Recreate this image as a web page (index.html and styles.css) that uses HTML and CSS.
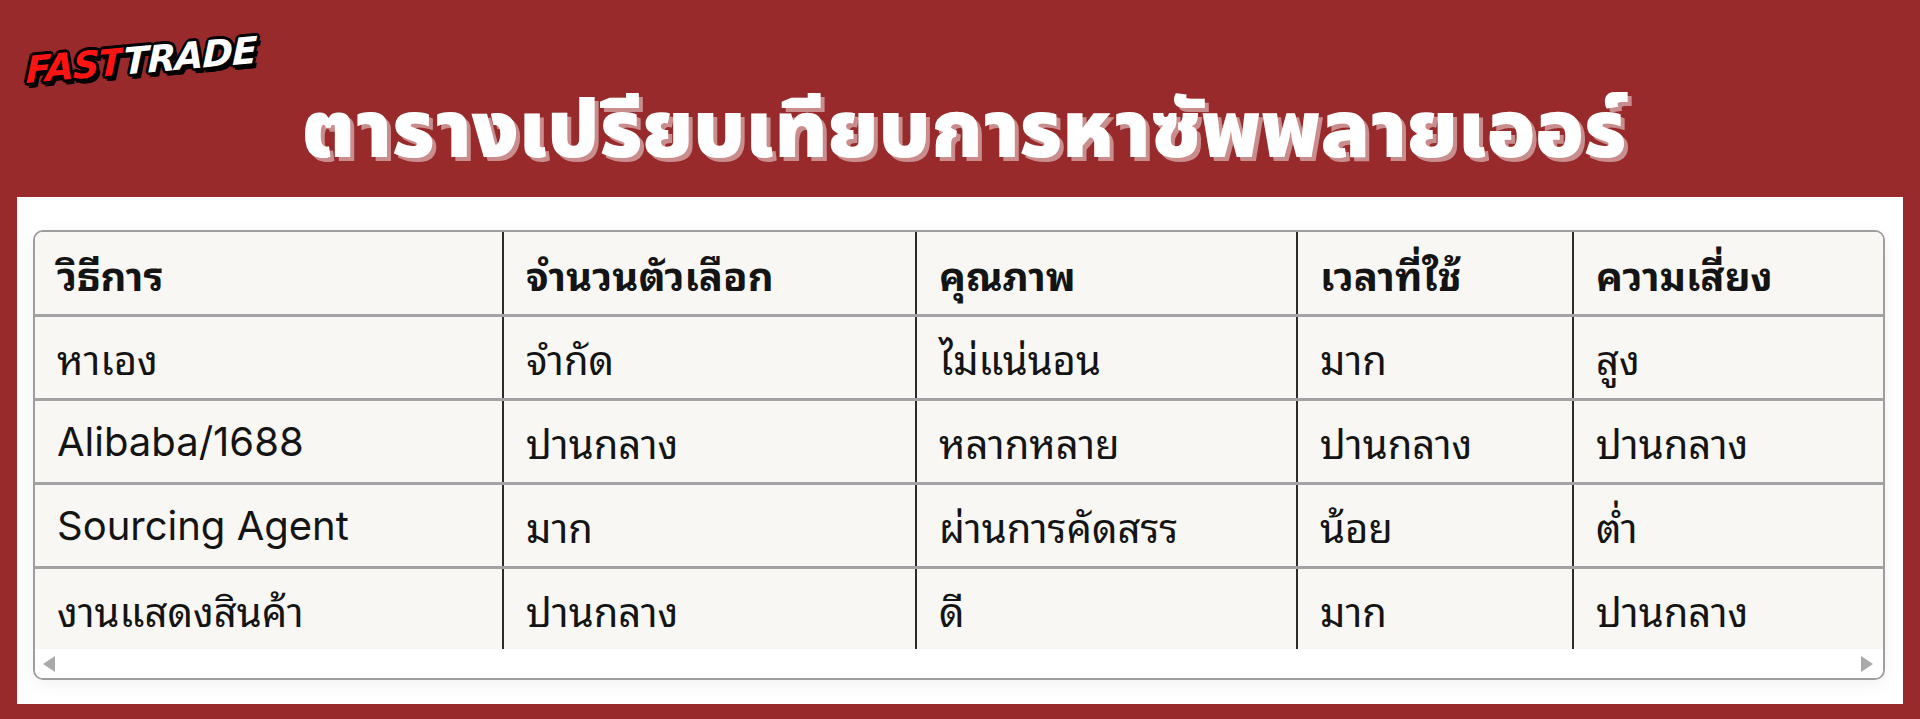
FILE: index.html
```html
<!DOCTYPE html>
<html lang="th">
<head>
<meta charset="utf-8">
<title>ตารางเปรียบเทียบการหาซัพพลายเออร์</title>
<link rel="stylesheet" href="styles.css">
</head>
<body>
<header class="header">
  <div class="logo"><span class="logo-text"><span class="fast">FAST</span><span class="trade">TRADE</span></span></div>
  <h1 class="title">ตารางเปรียบเทียบการหาซัพพลายเออร์</h1>
</header>
<main class="panel">
  <div class="table-wrap">
    <table class="compare">
      <colgroup>
        <col class="c1"><col class="c2"><col class="c3"><col class="c4"><col class="c5">
      </colgroup>
      <thead>
        <tr><th>วิธีการ</th><th>จำนวนตัวเลือก</th><th>คุณภาพ</th><th>เวลาที่ใช้</th><th>ความเสี่ยง</th></tr>
      </thead>
      <tbody>
        <tr><td>หาเอง</td><td>จำกัด</td><td>ไม่แน่นอน</td><td>มาก</td><td>สูง</td></tr>
        <tr><td>Alibaba/1688</td><td>ปานกลาง</td><td>หลากหลาย</td><td>ปานกลาง</td><td>ปานกลาง</td></tr>
        <tr><td>Sourcing Agent</td><td>มาก</td><td>ผ่านการคัดสรร</td><td>น้อย</td><td>ต่ำ</td></tr>
        <tr><td>งานแสดงสินค้า</td><td>ปานกลาง</td><td>ดี</td><td>มาก</td><td>ปานกลาง</td></tr>
      </tbody>
    </table>
    <div class="scrollbar"><span class="arrow left"></span><span class="arrow right"></span></div>
  </div>
</main>
</body>
</html>
```

FILE: styles.css
```css
html, body {
  margin: 0;
  padding: 0;
}
body {
  width: 1920px;
  height: 719px;
  overflow: hidden;
  background: #992a2b;
}
.header {
  height: 197px;
  box-sizing: border-box;
}
.logo {
  height: 80px;
  padding: 51px 0 0 26px;
  box-sizing: border-box;
}
.logo-text {
  display: inline-block;
  font-family: "DejaVu Sans", sans-serif;
  font-weight: 700;
  font-style: italic;
  font-size: 37px;
  letter-spacing: -1px;
  line-height: 40px;
  transform: rotate(-5deg) skewX(-6deg);
  transform-origin: left center;
  text-shadow:
    -2px -2px 0 #000, 2px -2px 0 #000, -2px 2px 0 #000, 2px 2px 0 #000,
    0 -3px 0 #000, 0 3px 0 #000, -3px 0 0 #000, 3px 0 0 #000,
    4px 5px 0 #000, 2px 5px 0 #000;
}
.fast { color: #ff1414; }
.trade { color: #ffffff; }
.title {
  margin: 0;
  text-align: center;
  font-family: "Noto Sans Thai", "Kanit", "Prompt", "Noto Sans Thai UI", "Loma", sans-serif;
  font-weight: 900;
  font-size: 80px;
  line-height: 106px;
  color: #ffffff;
  text-shadow: 4px 4px 0 #c98d8e;
  padding-left: 8px;
}
.panel {
  display: block;
  margin: 0 17px;
  height: 507px;
  background: #ffffff;
  padding: 33px 18px 0 16px;
  box-sizing: border-box;
}
.table-wrap {
  height: 450px;
  border: 2px solid #9e9e9e;
  border-radius: 10px;
  overflow: hidden;
  background: #ffffff;
  box-sizing: border-box;
  box-shadow: 0 4px 18px rgba(0, 0, 0, 0.06);
  display: flex;
  flex-direction: column;
}
.compare {
  border-collapse: collapse;
  table-layout: fixed;
  width: 1848px;
  background: #f8f7f3;
  font-family: "Inter", "Noto Sans Thai Looped", "Loma", "Tahoma", "Garuda", "Noto Sans Thai", sans-serif;
  font-size: 40px;
  color: #141414;
}
.c1 { width: 468px; }
.c2 { width: 413px; }
.c3 { width: 381px; }
.c4 { width: 276px; }
.c5 { width: 310px; }
.compare th, .compare td {
  height: 84px;
  padding: 0 22px;
  text-align: left;
  vertical-align: middle;
  border-right: 2px solid #2b2b2b;
  border-bottom: 3px solid #a3a3a3;
  box-sizing: border-box;
  white-space: nowrap;
  overflow: hidden;
}
.compare th {
  font-weight: 700;
  height: 83px;
}
.compare th:last-child, .compare td:last-child {
  border-right: none;
}
.compare tbody tr:last-child td {
  border-bottom: none;
  height: 82px;
}
.scrollbar {
  flex: 1;
  display: flex;
  justify-content: space-between;
  align-items: center;
  padding: 0 10px 0 8px;
  background: #ffffff;
}
.arrow {
  width: 0;
  height: 0;
  border-top: 8px solid transparent;
  border-bottom: 8px solid transparent;
}
.arrow.left { border-right: 12px solid #a9a9a9; }
.arrow.right { border-left: 12px solid #a9a9a9; }
```
